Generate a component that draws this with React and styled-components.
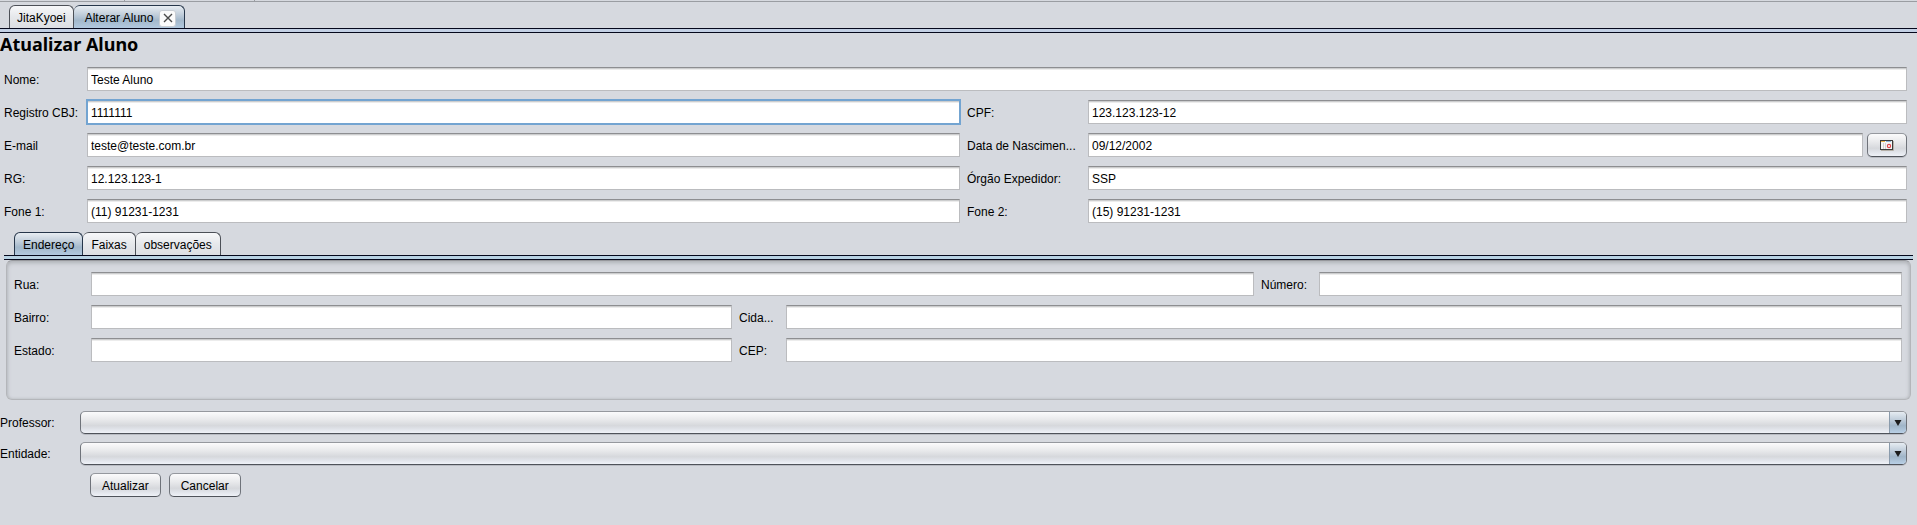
import React, { useState } from "react";
import styled, { createGlobalStyle, css } from "styled-components";

const GlobalStyle = createGlobalStyle`
  *, *::before, *::after { box-sizing: border-box; }
  body {
    margin: 0;
    background: #d6d9df;
    color: #000;
    font: 12px/16px "Liberation Sans", Arial, sans-serif;
  }
  button, input, select { font: inherit; color: inherit; margin: 0; }
`;

const raised = css`
  border: 1px solid #62666d;
  border-color: #95989e #6f737a #4f535a;
  border-radius: 5px;
  background: linear-gradient(#fbfbfc 0%, #e9eaec 35%, #d6d8dc 65%, #dfe2e8 80%, #eff2f8 100%);
  box-shadow: 0 1px 0 #b9bcc3;
`;

const Window = styled.div`
  display: flex;
  flex-direction: column;
`;

const Toolbar = styled.div`
  display: flex;
  height: 2px;
  border-bottom: 1px solid #9a9da2;
`;

const ToolbarSlot = styled.div`
  width: ${(p) => p.$width}px;
  border-right: 1px solid #9a9da2;
`;

const TabList = styled.div`
  display: flex;
  padding: ${(p) => p.$padding};
`;

const Tab = styled.div`
  display: flex;
  align-items: center;
  gap: 6px;
  height: 23px;
  padding: 2px ${(p) => p.$pad || 8}px 0;
  border: 1px solid #4c5057;
  border-left-width: ${(p) => (p.$first ? 1 : 0)}px;
  border-bottom: 0;
  border-radius: 6px 6px 0 0;
  background: linear-gradient(#f7f8fa, #e6e8eb 50%, #dcdee3);
  ${(p) =>
    p.$active &&
    css`
      border-color: #26364a;
      background: linear-gradient(#e8edf2, #c0cdda 40%, #a3b8cb 65%, #b2c9df);
    `}
  ${(p) => p.$closable && "padding: 2px 8px 0 11px;"}
`;

const TabButton = styled.button`
  padding: 0;
  border: 0;
  background: none;
`;

const CloseButton = styled.button`
  display: flex;
  align-items: center;
  justify-content: center;
  width: 17px;
  height: 17px;
  padding: 0;
  border: 1px solid #c9ced4;
  border-radius: 3px;
  background: #fbfbfb;
`;

const TabRule = styled.div`
  height: 5px;
  margin: 0 ${(p) => p.$inset}px;
  border: solid #05081c;
  border-width: 1px 0;
  background: ${(p) => p.$color};
`;

const Title = styled.h1`
  margin: 0;
  padding-bottom: 2px;
  font: bold 18px/22px "Noto Sans", Tahoma, sans-serif;
`;

const FormGrid = styled.div`
  display: grid;
  grid-template-columns: 83px minmax(0, 873fr) 128px minmax(0, 819fr);
  row-gap: 9px;
  padding: 10px 10px 0 4px;
`;

const Row = styled.div`
  display: grid;
  grid-template-columns: ${(p) => p.$columns};
`;

const Label = styled.label`
  padding-top: 2px;
  padding-left: ${(p) => p.$indent || 0}px;
  line-height: ${(p) => (p.$compact ? 20 : 22)}px;
  white-space: nowrap;
  overflow: hidden;
`;

const TextField = styled.input`
  width: 100%;
  min-width: 0;
  height: 24px;
  padding: 1px 3px 0;
  border: 1px solid #bbbcbf;
  border-top-color: #8d8e91;
  border-radius: 0;
  outline: 0;
  background: #fff;
  box-shadow: inset 0 1px 0 #cccdce, inset 0 2px 0 #ececec;
  grid-column: ${(p) => (p.$wide ? "2 / -1" : "auto")};
  ${(p) => p.$focused && "outline: 2px solid #73a4d1; outline-offset: -1px;"}
`;

const DateGroup = styled.div`
  display: flex;
  gap: 4px;
`;

const Button = styled.button`
  ${raised}
  display: flex;
  align-items: center;
  justify-content: center;
  height: 24px;
  padding: 1px 11px 0;
`;

const CalendarButton = styled(Button)`
  flex: 0 0 40px;
  padding: 0;
`;

const TabPanel = styled.div`
  display: flex;
  flex-direction: column;
  gap: 9px;
  min-height: 140px;
  margin: 0 6px;
  padding: 11px 8px 11px 7px;
  border: 1px solid #b4b6ba;
  border-top-color: #96989c;
  border-radius: 6px;
  box-shadow: inset 0 2px 4px #b0b3b8, inset 0 0 3px #bcbfc4;
`;

const SelectRows = styled.div`
  display: flex;
  flex-direction: column;
  gap: 8px;
  padding: 11px 10px 0 0;
`;

const SelectBox = styled.div`
  ${raised}
  display: grid;
  grid-template-columns: minmax(0, 1fr) 17px;
  height: 23px;
  overflow: hidden;
`;

const Select = styled.select`
  grid-area: 1 / 1 / 2 / 3;
  width: 100%;
  padding: 0 22px 0 6px;
  border: 0;
  background: none;
  appearance: none;
`;

const Arrow = styled.span`
  grid-area: 1 / 2;
  display: flex;
  align-items: center;
  justify-content: center;
  border-left: 1px solid #8a9bac;
  background: linear-gradient(#e6ecf2, #bccad8 40%, #a0b5c8 65%, #b9d0e6);
  pointer-events: none;
`;

const Actions = styled.div`
  display: flex;
  gap: 8px;
  padding: 8px 0 0 90px;
`;

function CloseIcon() {
  return (
    <svg width="10" height="10" viewBox="0 0 10 10" aria-hidden="true">
      <path d="M1 1L9 9M9 1L1 9" stroke="#4a4a4a" strokeWidth="1.4" />
    </svg>
  );
}

function CalendarIcon() {
  return (
    <svg width="14" height="11" viewBox="0 0 14 11" aria-hidden="true">
      <path d="M1 10.5H13.5V1" stroke="#b5b0a8" fill="none" />
      <rect x="0.5" y="0.5" width="12" height="9" fill="#f5f5f5" stroke="#3b3b3b" />
      <path d="M1 1.5H5" stroke="#e9b44c" />
      <path d="M6 1.5H11" stroke="#8fb8d8" />
      <path d="M3.5 3V9M5.5 3V9" stroke="#d2d2d2" />
      <circle cx="9" cy="6" r="1.6" fill="#fff" stroke="#e0474c" strokeWidth="1.2" />
    </svg>
  );
}

function ArrowIcon() {
  return (
    <svg width="8" height="6" viewBox="0 0 8 6" aria-hidden="true">
      <path d="M0.5 0H7.5L4 6Z" fill="#1c1c1c" />
    </svg>
  );
}

function Field({ id, label, value = "", indent, ...rest }) {
  return (
    <>
      <Label htmlFor={id} $indent={indent}>{label}</Label>
      <TextField id={id} defaultValue={value} {...rest} />
    </>
  );
}

function SelectRow({ id, label }) {
  return (
    <Row $columns="80px minmax(0, 1fr)">
      <Label htmlFor={id} $compact>{label}</Label>
      <SelectBox>
        <Select id={id} />
        <Arrow><ArrowIcon /></Arrow>
      </SelectBox>
    </Row>
  );
}

const SECTIONS = ["Endereço", "Faixas", "observações"];

export default function App() {
  const [section, setSection] = useState(0);
  return (
    <Window>
      <GlobalStyle />
      <Toolbar>
        <ToolbarSlot $width={125} />
        <ToolbarSlot $width={130} />
      </Toolbar>
      <TabList role="tablist" $padding="3px 9px 0">
        <Tab $first $pad={7}><TabButton role="tab">JitaKyoei</TabButton></Tab>
        <Tab $active $closable>
          <TabButton role="tab" aria-selected="true">Alterar Aluno</TabButton>
          <CloseButton aria-label="Fechar"><CloseIcon /></CloseButton>
        </Tab>
      </TabList>
      <TabRule $inset={0} $color="#c3d0e4" />
      <Title>Atualizar Aluno</Title>
      <FormGrid>
        <Field id="nome" label="Nome:" value="Teste Aluno" $wide />
        <Field id="registro" label="Registro CBJ:" value="1111111" $focused />
        <Field id="cpf" label="CPF:" value="123.123.123-12" indent={7} />
        <Field id="email" label="E-mail" value="teste@teste.com.br" />
        <Label htmlFor="nascimento" $indent={7}>Data de Nascimen...</Label>
        <DateGroup>
          <TextField id="nascimento" defaultValue="09/12/2002" />
          <CalendarButton aria-label="Calendário"><CalendarIcon /></CalendarButton>
        </DateGroup>
        <Field id="rg" label="RG:" value="12.123.123-1" />
        <Field id="orgao" label="Órgão Expedidor:" value="SSP" indent={7} />
        <Field id="fone1" label="Fone 1:" value="(11) 91231-1231" />
        <Field id="fone2" label="Fone 2:" value="(15) 91231-1231" indent={7} />
      </FormGrid>
      <TabList role="tablist" $padding="9px 14px 0">
        {SECTIONS.map((name, i) => (
          <Tab key={name} $first={i === 0} $active={i === section}>
            <TabButton role="tab" aria-selected={i === section} onClick={() => setSection(i)}>
              {name}
            </TabButton>
          </Tab>
        ))}
      </TabList>
      <TabRule $inset={4} $color="#b9d3e4" />
      <TabPanel role="tabpanel">
        <Row $columns="77px minmax(0, 1163fr) 65px minmax(0, 583fr)">
          <Field id="rua" label="Rua:" />
          <Field id="numero" label="Número:" indent={7} />
        </Row>
        <Row $columns="77px minmax(0, 641fr) 54px minmax(0, 1116fr)">
          <Field id="bairro" label="Bairro:" />
          <Field id="cidade" label="Cida..." indent={7} />
        </Row>
        <Row $columns="77px minmax(0, 641fr) 54px minmax(0, 1116fr)">
          <Field id="estado" label="Estado:" />
          <Field id="cep" label="CEP:" indent={7} />
        </Row>
      </TabPanel>
      <SelectRows>
        <SelectRow id="professor" label="Professor:" />
        <SelectRow id="entidade" label="Entidade:" />
      </SelectRows>
      <Actions>
        <Button>Atualizar</Button>
        <Button>Cancelar</Button>
      </Actions>
    </Window>
  );
}
